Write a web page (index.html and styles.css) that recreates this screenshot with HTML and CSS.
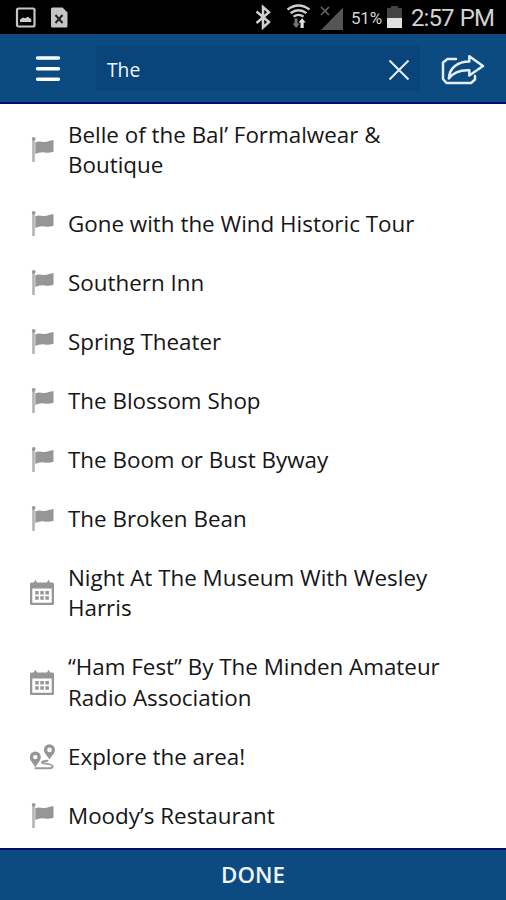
FILE: index.html
```html
<!DOCTYPE html>
<html lang="en">
<head>
<meta charset="utf-8">
<title>Search</title>
<link rel="stylesheet" href="styles.css">
</head>
<body>
<svg class="defs" width="0" height="0">
  <symbol id="flag" viewBox="0 0 26 28">
    <path d="M4.500 3v23" stroke="#b4b4b4" stroke-width="2.600"/>
    <circle cx="4.700" cy="2.800" r="1.900" fill="#999"/>
    <path d="M6.300 6.200c3-1.200 5.500-.6 8-.3 3.500.4 7-1.500 10.200-1.900v11.800c-3.500 1.100-6 1.300-9 .7-3.500-.7-6 .4-9.200 1.500z" fill="#969696"/>
  </symbol>
  <symbol id="calendar" viewBox="0 0 26 28">
    <path fill="#969696" fill-rule="evenodd" d="M2.500 3.600h2.300L6.400.8 8 3.600h10l1.600-2.800 1.600 2.800h2.300q1.500 0 1.500 1.500v19.400q0 1.500-1.500 1.500h-21q-1.500 0-1.500-1.500V5.100q0-1.500 1.500-1.500zM3.300 9.600v14.100h19.400V9.600z"/>
    <path fill="#969696" d="M6.200 12h3.500v3.500H6.200zm5.100 0h3.500v3.500h-3.500zm5.100 0h3.500v3.500h-3.500zM6.200 17.200h3.500v3.500H6.200zm5.100 0h3.500v3.500h-3.500zm5.100 0h3.500v3.500h-3.500z"/>
  </symbol>
  <symbol id="route" viewBox="0 0 26 28">
    <path fill="#969696" fill-rule="evenodd" d="M6.300 8.500a5.500 5.500 0 0 1 5.500 5.500c0 4-3.500 6.500-5.500 10.200C4.300 20.500.8 18 .8 14a5.500 5.500 0 0 1 5.500-5.500zm0 3.400a2.200 2.200 0 1 0 0 4.400 2.200 2.200 0 0 0 0-4.400zM20.500 1.200A5.600 5.600 0 0 1 26 6.800c0 3.800-3.500 6-5.500 9.700-2-3.700-5.600-5.900-5.600-9.700a5.600 5.600 0 0 1 5.600-5.600zm0 3.400a2.300 2.300 0 1 0 0 4.600 2.300 2.300 0 0 0 0-4.600z"/>
    <path d="M18.500 17.800c-4 .1-5.800.8-5.500 1.800.4 1.200 10.700 1 10.700 3.600 0 1.700-1.400 2.100-3.200 2.100H6.500" fill="none" stroke="#999" stroke-width="1.900" stroke-linecap="round"/>
  </symbol>
</svg>
<div class="screen">
  <div class="status">
    <svg class="notifications" width="56" height="34" viewBox="0 0 56 34">
      <rect x="2" y="8.500" width="17.500" height="18" rx="1.500" fill="none" stroke="#c6c6c6" stroke-width="2.200"/>
      <path d="M5 22v-2.500l3-2 2 .7 3-1.500 3.300 2.800V22z" fill="#ccc"/>
      <path d="M37.500 7.500h10l5 5V26q0 1.500-1.500 1.500H37.500Q36 27.500 36 26V9q0-1.500 1.500-1.500z" fill="#c6c6c6"/>
      <path d="M40.500 15l7 8m0-8l-7 8" stroke="#222" stroke-width="2"/>
    </svg>
    <svg class="signals" width="90" height="34" viewBox="254 0 90 34">
      <path d="M256.500 11.500l12.500 10.500-6 5.500V7l6 5.300-12.500 10.700" fill="none" stroke="#d0d0d0" stroke-width="2.500"/>
      <g fill="none" stroke="#cfcfcf" stroke-width="2.300">
        <path d="M287.500 9.500q11-8 22 0M290.500 13.200q8-6 16 0M293.500 16.700q5-3.700 10 0"/>
      </g>
      <path d="M294.500 18.500h3v5h2.300l-3.600 4.600-3.600-4.600h1.900z" fill="#777"/>
      <path d="M300.500 28v-5.500h-2l3.600-4.200 3.600 4.200h-2V28z" fill="#e0e0e0"/>
      <path d="M343 7.500V30h-22z" fill="#555"/>
      <path d="M321 7l8 8m0-8l-8 8" stroke="#686868" stroke-width="1.500"/>
    </svg>
    <span class="percent">51%</span>
    <svg class="battery" width="15" height="34" viewBox="0 0 15 34">
      <path d="M0 8h4V6h7v2h4v10H0z" fill="#444"/>
      <path d="M0 18h15v10H0z" fill="#e0e0e0"/>
    </svg>
    <span class="clock">2:57 PM</span>
  </div>
  <header class="bar">
    <svg class="menu" width="26" height="28" viewBox="0 0 26 28">
      <path d="M2.500 3h21M2.500 13.700h21M2.500 24.300h21" stroke="#fff" stroke-width="3.400" stroke-linecap="round"/>
    </svg>
    <div class="search">
      <span class="query">The</span>
      <svg class="clear" width="22" height="22" viewBox="0 0 22 22"><path d="M1.500 1.500l19 19m0-19l-19 19" stroke="#e8f0fa" stroke-width="2"/></svg>
    </div>
    <svg class="share" width="44" height="32" viewBox="0 0 44 32">
      <g fill="none" stroke="#e6edfa" stroke-width="2.500" stroke-linejoin="round" stroke-linecap="round">
        <path d="M15 5H6.500L2 8.500v16.500L5.500 29h24.500l4-3.500v-3.500"/>
        <path d="M28.300 2.200L42 12 28.300 21.500v-5.300C19 15.800 12.500 18 7.800 24.500 8.500 14 16.500 7.500 28.300 7.500z"/>
      </g>
    </svg>
  </header>
  <ul class="results">
    <li><svg class="icon"><use href="#flag"/></svg><span>Belle of the Bal’ Formalwear &amp;<br>Boutique</span></li>
    <li><svg class="icon"><use href="#flag"/></svg><span>Gone with the Wind Historic Tour</span></li>
    <li><svg class="icon"><use href="#flag"/></svg><span>Southern Inn</span></li>
    <li><svg class="icon"><use href="#flag"/></svg><span>Spring Theater</span></li>
    <li><svg class="icon"><use href="#flag"/></svg><span>The Blossom Shop</span></li>
    <li><svg class="icon"><use href="#flag"/></svg><span>The Boom or Bust Byway</span></li>
    <li><svg class="icon"><use href="#flag"/></svg><span>The Broken Bean</span></li>
    <li><svg class="icon"><use href="#calendar"/></svg><span>Night At The Museum With Wesley<br>Harris</span></li>
    <li><svg class="icon"><use href="#calendar"/></svg><span>“Ham Fest” By The Minden Amateur<br>Radio Association</span></li>
    <li><svg class="icon"><use href="#route"/></svg><span>Explore the area!</span></li>
    <li><svg class="icon"><use href="#flag"/></svg><span>Moody’s Restaurant</span></li>
  </ul>
  <footer class="done">DONE</footer>
</div>
</body>
</html>
```

FILE: styles.css
```css
* { box-sizing: border-box; }
body {
  margin: 0;
  background: #fff;
  font-family: "Open Sans", "Noto Sans", sans-serif;
}
svg { display: block; flex: none; }
.defs { position: absolute; }
.screen {
  width: 506px;
  height: 900px;
  display: flex;
  flex-direction: column;
  overflow: hidden;
}
.status {
  flex: none;
  height: 34px;
  background: #000;
  display: flex;
  align-items: center;
  padding-left: 15px;
  color: #d2d2d2;
  font-family: Roboto, sans-serif;
  white-space: nowrap;
}
.signals { margin-left: 183px; }
.percent { width: 35px; margin-left: 7px; font-size: 17px; letter-spacing: -0.2px; line-height: 34px; padding-top: 2px; }
.battery { margin-left: 1px; }
.clock { margin-left: 9px; font-size: 24px; letter-spacing: -0.9px; word-spacing: 1px; line-height: 34px; padding-top: 2px; }
.bar {
  flex: none;
  height: 70px;
  background: #0b4b82;
  border-bottom: 2px solid #000d68;
  display: flex;
  align-items: center;
  padding-left: 35px;
}
.menu { margin-top: 2px; }
.search {
  width: 324px;
  height: 45px;
  margin-left: 35px;
  padding: 3px 10px 0 11px;
  border-radius: 3px;
  background: #09457b;
  display: flex;
  align-items: center;
  justify-content: space-between;
}
.query { color: #f2f5fa; font-size: 19.3px; font-weight: 500; }
.share { margin: 3px 0 0 21px; }
.results {
  flex: 1;
  min-height: 0;
  margin: 0;
  padding: 1px 0 0;
  list-style: none;
  overflow: hidden;
}
.results li {
  display: flex;
  align-items: center;
  padding: 14.5px 0 14.5px 29px;
  color: #161616;
  font-size: 22.4px;
  line-height: 30.1px;
  white-space: nowrap;
}
.icon { width: 26px; height: 28px; margin-right: 13px; }
.done {
  flex: none;
  height: 52px;
  background: #0b4b82;
  border-top: 2px solid #000d68;
  color: #f0f4fb;
  font-size: 22.3px;
  font-weight: 600;
  line-height: 50px;
  text-align: center;
}
```
